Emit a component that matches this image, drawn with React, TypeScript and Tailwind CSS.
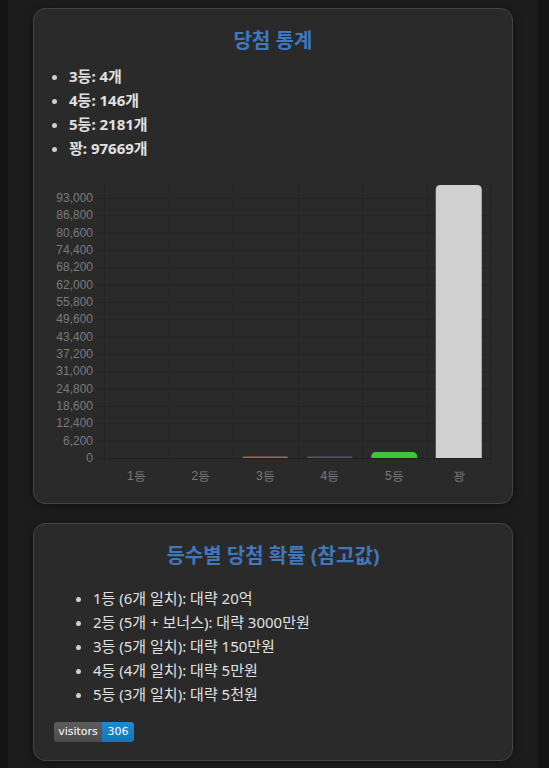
const stats = [
  { label: "3등", count: 4 },
  { label: "4등", count: 146 },
  { label: "5등", count: 2181 },
  { label: "꽝", count: 97669 },
];

const odds = [
  "1등 (6개 일치): 대략 20억",
  "2등 (5개 + 보너스): 대략 3000만원",
  "3등 (5개 일치): 대략 150만원",
  "4등 (4개 일치): 대략 5만원",
  "5등 (3개 일치): 대략 5천원",
];

const bars = [
  { label: "1등", value: 0, color: "#e05555" },
  { label: "2등", value: 0, color: "#e0a040" },
  { label: "3등", value: 4, color: "#a86a45" },
  { label: "4등", value: 146, color: "#4f5a66" },
  { label: "5등", value: 2181, color: "#3cc63c" },
  { label: "꽝", value: 97669, color: "#d0d0d0" },
];

// chart geometry (svg coords)
const W = 437;
const H = 311;
const plotLeft = 50;
const plotRight = 437;
const zeroY = 286;
const step = 6200;
const pxPerUnit = 260 / 93000;
const colW = (plotRight - plotLeft) / bars.length;
const barW = 46;

function yOf(v: number) {
  return zeroY - v * pxPerUnit;
}

function ResultChart() {
  const ticks = Array.from({ length: 16 }, (_, i) => i * step);
  const topY = yOf(97669) - 1;
  return (
    <svg width={W} height={H} className="block" style={{ fontFamily: '"Liberation Sans", Arial, sans-serif' }}>
      {ticks.map((t) => (
        <g key={t}>
          <line x1={plotLeft - 7} x2={plotRight} y1={yOf(t) + 0.5} y2={yOf(t) + 0.5} stroke="#252525" strokeWidth={1} />
          <text x={39} y={yOf(t) + 4} textAnchor="end" fontSize={12} fill="#7a7a7a">
            {t.toLocaleString("en-US")}
          </text>
        </g>
      ))}
      {bars.map((_, i) => (
        <line
          key={i}
          x1={Math.round(plotLeft + i * colW) + 0.5}
          x2={Math.round(plotLeft + i * colW) + 0.5}
          y1={topY}
          y2={zeroY + 6}
          stroke="#252525"
        />
      ))}
      <line x1={plotRight - 0.5} x2={plotRight - 0.5} y1={topY} y2={zeroY + 6} stroke="#252525" />
      {bars.map((b, i) => {
        const cx = plotLeft + i * colW + colW / 2;
        const h = Math.max(b.value * pxPerUnit, b.value > 0 ? 1.5 : 0);
        const r = Math.min(5, h);
        const x = cx - barW / 2;
        const y = zeroY - h;
        return (
          <g key={b.label}>
            {h > 0 && (
              <path
                d={`M${x},${zeroY} L${x},${y + r} Q${x},${y} ${x + r},${y} L${x + barW - r},${y} Q${x + barW},${y} ${x + barW},${y + r} L${x + barW},${zeroY} Z`}
                fill={b.color}
              />
            )}
            <text x={cx} y={zeroY + 22} textAnchor="middle" fontSize={12} fill="#7a7a7a">
              {b.label}
            </text>
          </g>
        );
      })}
      <line x1={plotLeft} x2={plotRight} y1={zeroY + 0.5} y2={zeroY + 0.5} stroke="#1f1f1f" />
    </svg>
  );
}

function Card({ children, className = "" }: { children: React.ReactNode; className?: string }) {
  return (
    <section
      className={`rounded-[12px] border border-[#444] bg-[#2a2a2a] px-5 pt-5 shadow-[0_2px_8px_rgba(0,0,0,0.4)] ${className}`}
    >
      {children}
    </section>
  );
}

export default function App() {
  return (
    <div
      className="min-h-screen bg-[#141414]"
      style={{ fontFamily: '"Noto Sans", "Noto Sans CJK KR", sans-serif' }}
    >
      <div className="mx-[8px] min-h-screen w-[530px] bg-[#1c1c1c] px-[25px] pt-2 pb-6">
        <Card className="pb-5">
          <h2 className="text-center text-[20px] leading-6 font-bold text-[#3f78bf]">당첨 통계</h2>
          <ul className="mt-[11px] list-disc pl-[15px] text-[15px] leading-6 font-bold text-[#e0e0e0] marker:text-[#cfcfcf]">
            {stats.map((s) => (
              <li key={s.label}>
                {s.label}: {s.count}개
              </li>
            ))}
          </ul>
          <div className="mt-3">
            <ResultChart />
          </div>
        </Card>

        <Card className="mt-[19px] pb-[18px]">
          <h2 className="text-center text-[20px] leading-6 font-bold text-[#3f78bf]">등수별 당첨 확률 (참고값)</h2>
          <ul className="mt-[18px] list-disc pl-[39px] text-[15px] leading-6 text-[#e0e0e0] marker:text-[#cfcfcf]">
            {odds.map((o) => (
              <li key={o}>{o}</li>
            ))}
          </ul>
          <div
            className="mt-4 flex h-5 w-fit overflow-hidden rounded-[3px] text-[11px] leading-5 text-white"
            style={{ fontFamily: '"DejaVu Sans", Verdana, sans-serif' }}
          >
            <span className="w-[48px] bg-gradient-to-b from-[#5d5d5d] to-[#4c4c4c] text-center">visitors</span>
            <span className="w-[32px] bg-gradient-to-b from-[#1f8ad4] to-[#1575b8] text-center">306</span>
          </div>
        </Card>
      </div>
    </div>
  );
}
